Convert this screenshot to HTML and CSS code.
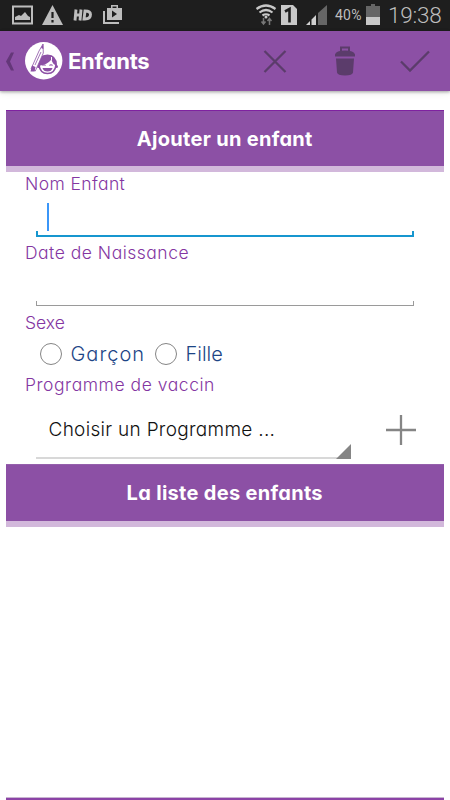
FILE: index.html
```html
<!DOCTYPE html>
<html lang="fr">
<head>
<meta charset="utf-8">
<title>Enfants</title>
<link rel="stylesheet" href="styles.css">
</head>
<body>
<header class="status">
  <svg class="status-left" width="130" height="31" viewBox="0 0 130 31">
    <path d="M13 6.500h19v17H13z" fill="none" stroke="#bdbdbd" stroke-width="2"/>
    <path d="M15 20v-3l4-2 2 1 4-4 3 4 2 1v3z" fill="#bdbdbd"/>
    <path d="M52.500 5 63 25H42z" fill="#bdbdbd"/>
    <path d="M52.500 12v6M52.500 20v2.500" stroke="#1e1e1e" stroke-width="2.200"/>
    <path d="M76 9.500l-1 11M81 9.500l-1 11M75 15h6M85 11l-1 8h1q5.500 0 5.500-4.500 0-3.500-5.500-3.500z" fill="none" stroke="#bdbdbd" stroke-width="2.900"/>
    <path d="M104 11v12h15" fill="none" stroke="#bdbdbd" stroke-width="2"/>
    <path d="M107 8h4V5h7v3h4v12h-15zM112.500 8h4V6.500h-4z" fill="#bdbdbd" fill-rule="evenodd"/>
    <path d="M112 10.500v7l5-3.500z" fill="#1e1e1e"/>
  </svg>
  <svg class="status-right" width="78" height="31" viewBox="250 0 78 31">
    <path d="M256.500 9q9.500-7 19 0M259.500 12.500q6.500-5 13 0M262.500 15.500q3.500-2.500 7 0" fill="none" stroke="#c8c8c8" stroke-width="2.200"/>
    <circle cx="266" cy="17" r="1.500" fill="#c8c8c8"/>
    <path d="M263.500 18v5M261.500 21.500l2 2.500 2-2.500M269.500 25v-5M267.500 21l2-2.500 2 2.500" fill="none" stroke="#777" stroke-width="1.500"/>
    <path d="M281 5h12l4 4v16h-16z" fill="#c8c8c8"/>
    <path d="M285 11.500 289.500 9v13.500" fill="none" stroke="#1e1e1e" stroke-width="2.600"/>
    <path d="M306 25l4-4v4zM311.500 25v-5.500l4.500-4.500v10z" fill="#d0d0d0"/>
    <path d="M318 25V13l9-8v20z" fill="#666"/>
  </svg>
  <span class="percent">40%</span>
  <svg class="battery" width="14" height="31" viewBox="0 0 14 31">
    <path d="M0 6h5V4h4v2h5v11H0z" fill="#666"/><path d="M0 17h14v8H0z" fill="#c8c8c8"/>
  </svg>
  <span class="clock">19:38</span>
</header>
<nav class="appbar">
  <svg class="back" width="25" height="60" viewBox="0 0 25 60"><path d="M11 21.500h3l-4 9 4 9h-3l-5-9z" fill="#643779"/></svg>
  <svg class="logo" width="38" height="38" viewBox="0 0 38 38">
    <circle cx="18.700" cy="18.700" r="18.700" fill="#fff"/>
    <path d="M13 23q-.5-10 9.500-10.500Q32 13 32 23l-.5 1q-4-2-5-6.500-4 5-13 6.500z" fill="#8c50a5"/>
    <path d="M14 23q1 8.500 8.500 8.500T31 23" fill="none" stroke="#8c50a5" stroke-width="1.600"/>
    <circle cx="13.500" cy="24.500" r="1.500" fill="#8c50a5"/><circle cx="31.500" cy="24.500" r="1.500" fill="#8c50a5"/>
    <path d="M26.500 15v3" stroke="#fff"/>
    <path d="M17.500 23.500q1.500-1.500 3 0M24.500 23.500q1.500-1.500 3 0" fill="none" stroke="#8c50a5" stroke-width="1.100"/>
    <path d="M17.500 26h10q-1 3.500-5 3.500t-5-3.500z" fill="#8c50a5"/>
    <path d="M6 27 14 9l4-7 .3 9-8 18z" fill="#fff" stroke="#8c50a5" stroke-width=".8"/>
    <path d="M5.500 29.500 7 23.500l3.500 1.500-1 4.500zM16 6l2.200-4 .2 5z" fill="#8c50a5"/>
    <path d="M16 10l-6 13" stroke="#8c50a5" stroke-width=".8"/>
  </svg>
  <h1>Enfants</h1>
  <svg class="actions" width="170" height="60" viewBox="260 31 170 60">
    <path d="M264.500 51 285.500 72M285.500 51 264.500 72M401 61.500l9 9 19-19" fill="none" stroke="#5b3c6b" stroke-width="2.300"/>
    <path d="M341 51v-3.500h8V51" fill="none" stroke="#5b3c6b" stroke-width="2"/>
    <path d="M335 56.500v-2q1-4 10-4t10 4v2zM336 58.500h18l-1 14q-.5 3-8 3t-8-3z" fill="#5b3c6b"/>
  </svg>
</nav>
<main>
  <h2 class="band"><span>Ajouter un enfant</span></h2>
  <form class="form">
    <div class="label name"><span>Nom Enfant</span></div>
    <div class="input focused"><i class="caret"></i></div>
    <div class="label date"><span>Date de Naissance</span></div>
    <div class="input"></div>
    <div class="label sex"><span>Sexe</span></div>
    <div class="radios"><i class="radio"></i><span class="boy">Garçon</span><i class="radio"></i><span class="girl">Fille</span></div>
    <div class="label program"><span>Programme de vaccin</span></div>
    <div class="row">
      <div class="select"><span>Choisir un Programme ...</span>
        <svg class="corner" width="15" height="15" viewBox="0 0 15 15"><path d="M15 0v15H0z" fill="#858585"/></svg>
      </div>
      <svg class="plus" width="30" height="30" viewBox="0 0 30 30"><path d="M0 15h30M15 0v30" stroke="#858585" stroke-width="2.300"/></svg>
    </div>
  </form>
  <h2 class="band list"><span>La liste des enfants</span></h2>
</main>
<footer class="bottom"></footer>
</body>
</html>
```
FILE: styles.css
```css
* { box-sizing: border-box; }
body {
  margin: 0;
  height: 800px;
  overflow: hidden;
  display: flex;
  flex-direction: column;
  background: #fff;
  font-family: Inter, "Liberation Sans", sans-serif;
  font-feature-settings: "cv11";
}
svg { display: block; flex: none; }
h1, h2 { margin: 0; color: #fff; font-weight: 700; white-space: nowrap; }
.status {
  height: 31px;
  flex: none;
  display: flex;
  background: #1e1e1e;
  color: #bdbdbd;
  font-family: Roboto, sans-serif;
}
.status-right { margin-left: 120px; }
.percent { width: 31px; margin-left: 7px; font-size: 14px; line-height: 31px; letter-spacing: .2px; }
.clock { margin-left: 8px; font-size: 22.5px; font-weight: 300; line-height: 30px; letter-spacing: -.2px; }
.appbar {
  height: 60px;
  flex: none;
  display: flex;
  align-items: center;
  background: #8c50a5;
  box-shadow: 0 1px 3px rgba(0, 0, 0, .35), 0 3px 8px rgba(0, 0, 0, .06);
}
.appbar h1 { width: 84px; margin-left: 5px; font-size: 22px; line-height: 60px; letter-spacing: -.25px; }
.actions { margin-left: 108px; }
main { margin: 19px 6.500px 0 6px; }
.band {
  height: 62px;
  background: #8c50a5;
  border-top: 1px solid #7f22a0;
  border-bottom: 6px solid #d2b8db;
  font-size: 20px;
  line-height: 56px;
  letter-spacing: .3px;
  text-align: center;
}
.band.list { height: 63px; border-top-color: #9560ac; }
.form { height: 292px; padding: 0 29.500px 0 19px; }
.label { height: 24px; color: #8436a2; font-size: 17.5px; font-weight: 300; line-height: 24px; white-space: nowrap; }
.name { letter-spacing: .4px; }
.input {
  height: 35px;
  margin-left: 11px;
  margin-top: 6px;
  border-bottom: 1px solid #9a9a9a;
  background: linear-gradient(#9a9a9a, #9a9a9a) left bottom / 1px 4px no-repeat,
    linear-gradient(#9a9a9a, #9a9a9a) right bottom / 1px 4px no-repeat;
}
.input.focused {
  height: 34px;
  margin-top: 7px;
  border-bottom: 2px solid #1696cf;
  background: linear-gradient(#1696cf, #1696cf) left bottom / 2px 4px no-repeat,
    linear-gradient(#1696cf, #1696cf) right bottom / 2px 4px no-repeat;
}
.caret { display: block; width: 2px; height: 28px; margin-left: 10.500px; background: #3b96f8; }
.date { margin-top: 4px; letter-spacing: .5px; }
.sex { margin-top: 5px; }
.radios {
  height: 37px;
  padding-left: 15px;
  display: flex;
  align-items: center;
  color: #1d4586;
  font-size: 20px;
  font-weight: 300;
}
.radio { flex: none; width: 22px; height: 22px; border: 1px solid #858585; border-radius: 50%; }
.boy { width: 92.500px; padding-left: 8.500px; letter-spacing: 1px; }
.girl { padding-left: 9px; }
.program { margin-top: 1px; letter-spacing: .55px; }
.row { display: flex; justify-content: space-between; margin-left: 11px; height: 63px; }
.select {
  width: 315px;
  height: 62px;
  padding-left: 12.500px;
  position: relative;
  border-bottom: 2px solid #d8d8d8;
  color: #111;
  font-size: 19px;
  font-weight: 300;
  line-height: 65px;
  letter-spacing: .3px;
  white-space: nowrap;
}
.corner { position: absolute; right: 0; bottom: -2px; }
.plus { margin: 18px -2px 0 0; }
.bottom { height: 3px; flex: none; margin: auto 6px 0; background: #8b43a6; border-top: 1px solid #c9b5d1; }
```
